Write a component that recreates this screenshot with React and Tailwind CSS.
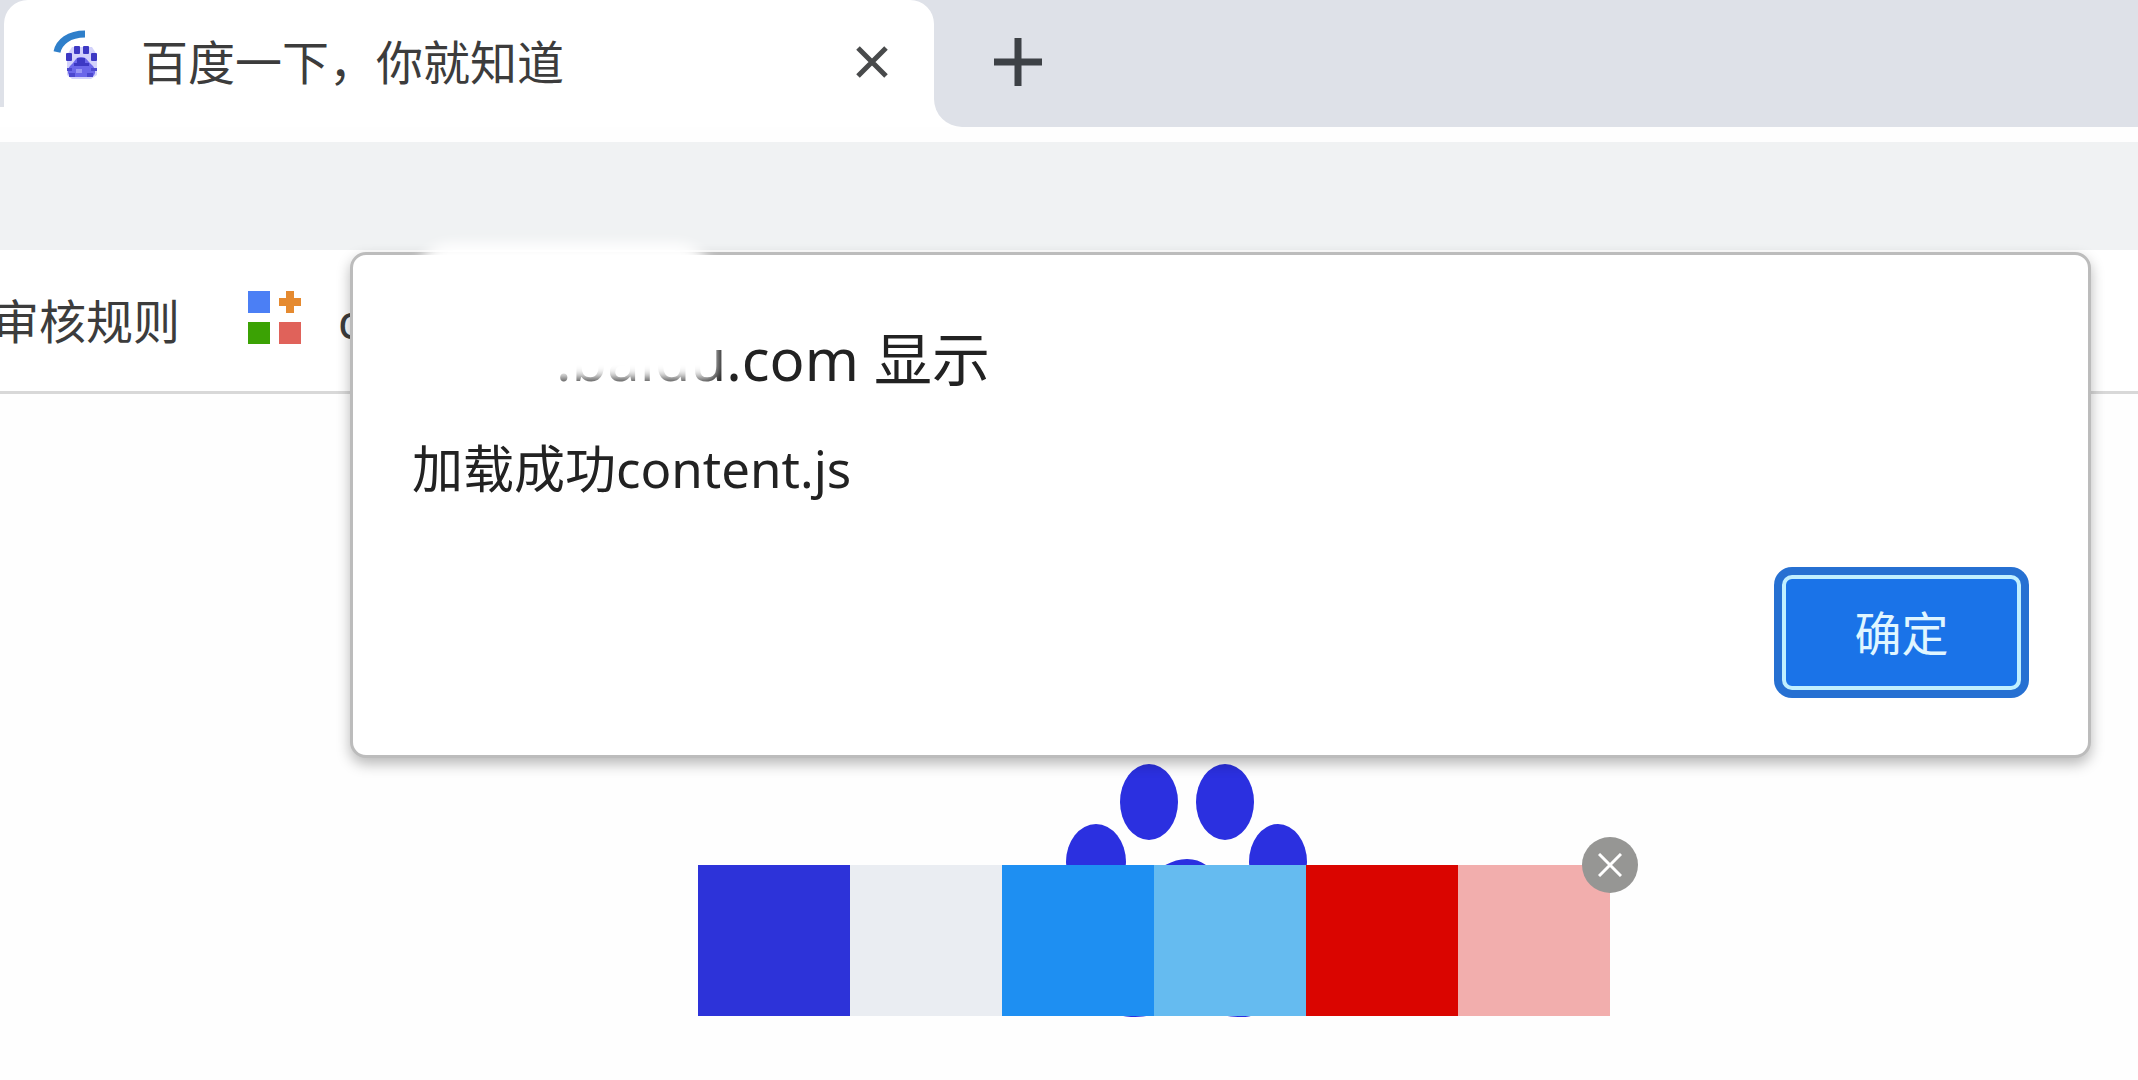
import { useState } from "react";

const swatches = [
    { name: "Indigo", className: "bg-[#2d33d9]" },
    { name: "Mist", className: "bg-[#eaedf2]" },
    { name: "Blue", className: "bg-[#1e8ff2]" },
    { name: "Sky", className: "bg-[#65bbf0]" },
    { name: "Red", className: "bg-[#da0500]" },
    { name: "Pink", className: "bg-[#f2aead]" },
];

function Favicon() {
    return (
        <svg className="h-16 w-14 shrink-0" viewBox="0 0 56 64" aria-hidden="true">
            <path d="M7 22C9 12 19 4 35 4" fill="none" stroke="#2f7fca" strokeWidth="7" />
            <path d="M22 17h20l5 8v20l-6 4H22l-5-4V25z" fill="#d3d2fb" />
            <g fill="#3d39c4">
                <rect x="24" y="16" width="6" height="8" rx="1" />
                <rect x="33" y="16" width="6" height="8" rx="1" />
                <rect x="16" y="23" width="6" height="8" rx="1" />
                <rect x="41" y="23" width="6" height="8" rx="1" />
            </g>
            <path d="M31 27c6 0 7 5 11 8s5 12-2 12H24c-8 0-7-9-3-12s4-8 10-8z" fill="#6b67ea" />
            <path d="M27 28h8v5h4v3H24v-3h3z" fill="#3d39c4" />
            <path d="M17 38h5v3h-5zM41 38h6v3h-6zM19 43h6v4h-6zM37 43h6v4h-6z" fill="#4b47cf" />
            <path d="M26 39h6v4h-6z" fill="#9a97f6" />
        </svg>
    );
}

function TabStrip() {
    return (
        <header className="flex h-[127px] bg-[#dee1e8]">
            <div className="w-1 shrink-0 border-b-20 border-white" />
            <div className="flex w-[930px] shrink-0 items-center rounded-t-[24px] bg-white pb-1 pl-[46px] pr-[42px]">
                <Favicon />
                <span className="ml-[35px] flex-1 text-[47px] leading-[60px] text-[#3c3c3c]">百度一下，你就知道</span>
                <button aria-label="Close tab" className="flex h-10 w-10 items-center justify-center">
                    <svg className="h-8 w-8" viewBox="0 0 32 32" aria-hidden="true">
                        <path d="M2 2l28 28M30 2L2 30" stroke="#484a4b" strokeWidth="5" />
                    </svg>
                </button>
            </div>
            <div className="flex-1 bg-linear-to-b from-[#dee1e8] from-50% to-white to-50%">
                <div className="flex h-full items-center rounded-bl-[28px] bg-[#dee1e8] pb-1 pl-[60px]">
                    <button aria-label="New tab" className="flex h-12 w-12 items-center justify-center">
                        <svg className="h-12 w-12" viewBox="0 0 48 48" aria-hidden="true">
                            <path d="M24 0v48M0 24h48" stroke="#3d4146" strokeWidth="7" />
                        </svg>
                    </button>
                </div>
            </div>
        </header>
    );
}

function BookmarksBar() {
    return (
        <nav className="flex h-[144px] items-center overflow-hidden border-b-3 border-[#d8d8d8] bg-white text-[47px] leading-[60px] text-[#3c3c3c]">
            <a href="#rules" className="-ml-2 whitespace-nowrap">审核规则</a>
            <a href="#apps" className="ml-[68px] flex items-center gap-9">
                <svg className="mb-1.5 h-[54px] w-[54px]" viewBox="0 0 54 54" aria-hidden="true">
                    <path d="M0 0h22v22H0z" fill="#4b7ff5" />
                    <path d="M38 0h8v7h7v8h-7v7h-8v-7h-7V7h7z" fill="#e58a30" />
                    <path d="M0 31h22v22H0z" fill="#3ba204" />
                    <path d="M31 31h22v22H31z" fill="#e0625a" />
                </svg>
                <span>c</span>
            </a>
        </nav>
    );
}

function AlertDialog({ onClose }) {
    return (
        <div
            role="alertdialog"
            aria-labelledby="alert-title"
            aria-describedby="alert-message"
            className="absolute left-[350px] right-[47px] top-[252px] rounded-2xl border-3 border-[#bcbcbc] bg-white px-[59px] pb-[57px] pt-16 shadow-[0_6px_14px_rgba(0,0,0,0.28)]"
        >
            <h1 id="alert-title" className="pl-36 text-[58px] leading-[80px] text-[#222]">.baidu.com 显示</h1>
            {/* soft white patch over the start of the host name */}
            <div className="absolute -top-3 left-[59px] h-[136px] w-[304px] rounded-[40px] rounded-br-lg bg-white blur-[6px]" />
            <p id="alert-message" className="mt-[34px] text-[51px] leading-[70px] text-[#222]">加载成功content.js</p>
            <div className="mt-16 flex justify-end">
                <button
                    onClick={onClose}
                    className="rounded-[18px] bg-[#2670d2] p-2 text-[47px] leading-[60px] text-[#e0f6ff]"
                >
                    <span className="flex h-[115px] w-[239px] items-center justify-center rounded-[10px] border-4 border-[#c0efff] bg-[#1a73e8]">
                        确定
                    </span>
                </button>
            </div>
        </div>
    );
}

function PawLogo() {
    return (
        <svg className="absolute left-[368px] top-[-102px] h-[256px] w-[242px]" viewBox="0 0 242 256" aria-hidden="true">
            <g fill="#2b30e0">
                <ellipse cx="83" cy="39" rx="29" ry="38" />
                <ellipse cx="159" cy="39" rx="29" ry="38" />
                <ellipse cx="30" cy="99" rx="30" ry="38" />
                <ellipse cx="212" cy="99" rx="29" ry="38" />
                <path d="M121 96c30 0 38 36 62 58s40 100-7 100c-22 0-30-6-55-6s-32 6-56 6c-47 0-44-77-20-100s46-58 76-58z" />
            </g>
        </svg>
    );
}

function Palette({ onClose }) {
    return (
        <section aria-label="Palette" className="relative w-[912px]">
            <PawLogo />
            <ul className="relative flex h-[151px]">
                {swatches.map((s) => (
                    <li key={s.name} className={`flex-1 ${s.className}`} />
                ))}
            </ul>
            <button
                onClick={onClose}
                aria-label="Close palette"
                className="absolute -right-7 -top-7 flex h-14 w-14 items-center justify-center rounded-full bg-[#969694]"
            >
                <svg className="h-6 w-6" viewBox="0 0 24 24" aria-hidden="true">
                    <path d="M1 1l22 22M23 1L1 23" stroke="#fff" strokeWidth="3" />
                </svg>
            </button>
        </section>
    );
}

export default function App() {
    const [alertOpen, setAlertOpen] = useState(true);
    const [paletteOpen, setPaletteOpen] = useState(true);

    return (
        <div className="relative min-h-screen overflow-hidden bg-[#fefefe] font-['Noto_Sans','Noto_Sans_CJK_SC',sans-serif]">
            <TabStrip />
            <div className="mt-[15px] h-[108px] bg-[#f0f2f3]" />
            <BookmarksBar />
            <main className="flex justify-center pl-[170px] pt-[471px]">
                {paletteOpen && <Palette onClose={() => setPaletteOpen(false)} />}
            </main>
            {alertOpen && <AlertDialog onClose={() => setAlertOpen(false)} />}
        </div>
    );
}
